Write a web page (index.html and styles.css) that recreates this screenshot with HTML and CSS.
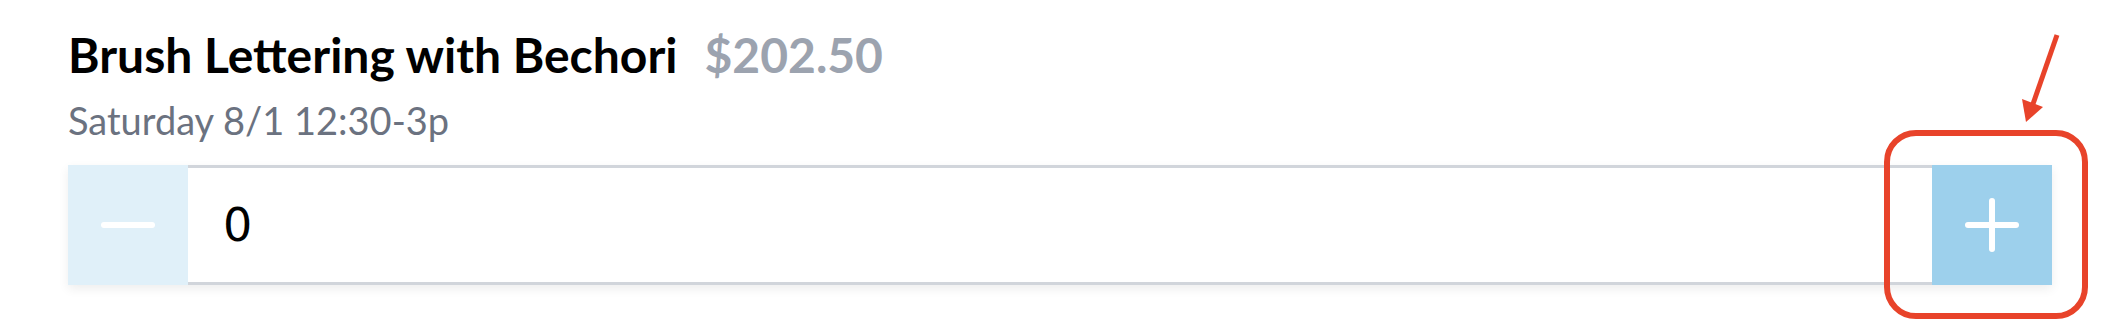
FILE: index.html
```html
<!DOCTYPE html>
<html lang="en">
<head>
<meta charset="utf-8">
<title>Brush Lettering with Bechori</title>
<link rel="stylesheet" href="styles.css">
</head>
<body>
<div class="page">
  <div class="ticket">
    <h2 class="title"><span class="name">Brush Lettering with Bechori</span><span class="price">$202.50</span></h2>
    <p class="when">Saturday 8/1 12:30-3p</p>
    <div class="stepper">
      <button class="btn btn-minus" type="button" aria-label="Decrease">
        <svg width="56" height="8" viewBox="0 0 56 8"><line x1="4" y1="4" x2="52" y2="4" stroke="#fff" stroke-width="6" stroke-linecap="round"/></svg>
      </button>
      <input class="qty" type="text" value="0">
      <button class="btn btn-plus" type="button" aria-label="Increase">
        <svg width="56" height="56" viewBox="0 0 56 56"><line x1="4" y1="28" x2="52" y2="28" stroke="#fff" stroke-width="6" stroke-linecap="round"/><line x1="28" y1="4" x2="28" y2="52" stroke="#fff" stroke-width="6" stroke-linecap="round"/></svg>
      </button>
    </div>
  </div>
  <div class="callout"></div>
  <svg class="arrow" width="60" height="110" viewBox="0 0 60 110">
    <line x1="49" y1="7" x2="25" y2="76" stroke="#e8432a" stroke-width="5"/>
    <polygon points="18,94 14,71 35,79" fill="#e8432a"/>
  </svg>
</div>
</body>
</html>
```
FILE: styles.css
```css
html, body {
  margin: 0;
  padding: 0;
  background: #ffffff;
}
.page {
  position: relative;
  width: 2120px;
  height: 336px;
  overflow: hidden;
}
.ticket {
  padding: 26px 68px 0 68px;
}
.title {
  margin: 0;
  font-family: Lato, "Liberation Sans", sans-serif;
  font-size: 48px;
  line-height: 58px;
  font-weight: 700;
  display: flex;
  gap: 27px;
}
.name {
  color: #000000;
}
.price {
  color: #9ca3af;
}
.when {
  margin: 12px 0 0 0;
  font-family: Lato, "Liberation Sans", sans-serif;
  font-size: 38px;
  line-height: 48px;
  font-weight: 400;
  color: #6b7280;
}
.stepper {
  margin-top: 21px;
  display: flex;
  height: 120px;
  box-shadow: 0 4px 10px rgba(0, 0, 0, 0.07);
}
.btn {
  width: 120px;
  height: 120px;
  flex: none;
  border: 0;
  padding: 0;
  margin: 0;
  display: flex;
  align-items: center;
  justify-content: center;
}
.btn-minus {
  background: #e0f0f9;
}
.btn-plus {
  background: #9dd0ec;
}
.qty {
  flex: 1;
  min-width: 0;
  margin: 0;
  box-sizing: border-box;
  height: 120px;
  border: 0;
  border-top: 3px solid #d1d5db;
  border-bottom: 3px solid #d1d5db;
  padding: 0 0 0 35px;
  font-family: "DejaVu Sans", Verdana, sans-serif;
  font-size: 46px;
  color: #000000;
  background: #ffffff;
  outline: none;
}
.callout {
  position: absolute;
  left: 1884px;
  top: 130px;
  width: 192px;
  height: 177px;
  border: 6px solid #e8432a;
  border-radius: 32px;
}
.arrow {
  position: absolute;
  left: 2008px;
  top: 28px;
}
```
